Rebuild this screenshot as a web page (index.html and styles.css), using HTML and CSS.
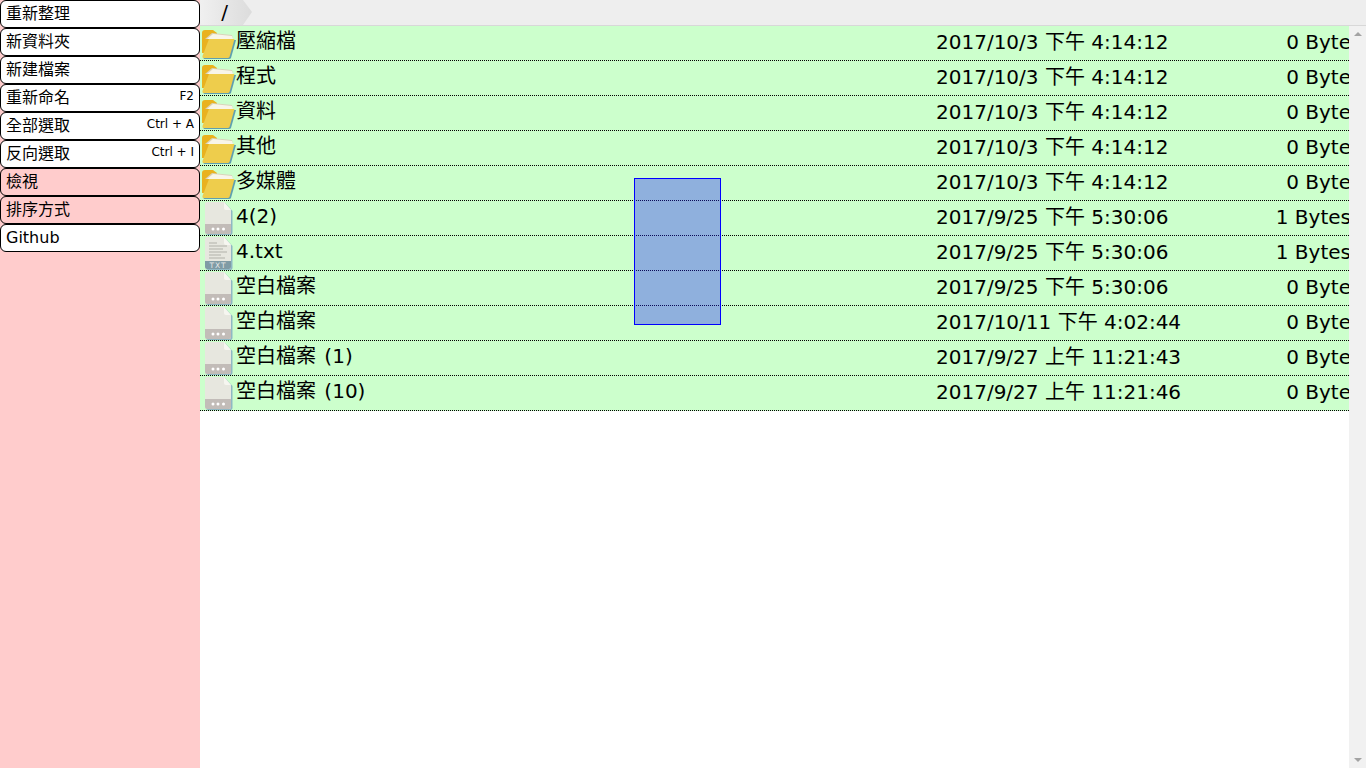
FILE: index.html
```html
<!DOCTYPE html>
<html lang="zh-Hant">
<head>
<meta charset="utf-8">
<title>檔案總管</title>
<link rel="stylesheet" href="styles.css">
</head>
<body>
<svg class="defs" width="0" height="0" aria-hidden="true">
  <defs>
    <symbol id="folder" viewBox="0 0 36 34">
      <path d="M2 7q0-3 3-3h8l4 3v20H2z" fill="#e9b21f"/>
      <path d="M5 13l7-6 20 2 1 4z" fill="#d9d3ba"/>
      <path d="M7 13l6-5 19 2 1 3z" fill="#f8f5e8"/>
      <path d="M10 14h26l-5 18q-.5 1-2 1H4.500q-1.500 0-1-2z" fill="#5f9fb0"/>
      <path d="M9 13h25.500l-5 18q-.5 1-2 1H3.500q-1.500 0-1-2z" fill="#eecd4c"/>
    </symbol>
    <symbol id="file" viewBox="0 0 36 34">
      <path d="M8 2h17l7.500 8v22q0 2-2 2H8q-2 0-2-2V4q0-2 2-2z" fill="#8fb8c4"/>
      <path d="M7 1h17l7 8v22q0 2-2 2H7q-2 0-2-2V3q0-2 2-2z" fill="#e7e7df"/>
      <path d="M24 1l7 8h-5q-2 0-2-2z" fill="#f6f6f0"/>
      <path d="M5 23h26v8q0 2-2 2H7q-2 0-2-2z" fill="#c2bcb8"/>
      <circle cx="13" cy="28" r="1.500" fill="#fff"/>
      <circle cx="18" cy="28" r="1.500" fill="#fff"/>
      <circle cx="23.500" cy="28" r="1.500" fill="#fff"/>
    </symbol>
    <symbol id="txt" viewBox="0 0 36 34">
      <path d="M8 2h17l7.500 8v22q0 2-2 2H8q-2 0-2-2V4q0-2 2-2z" fill="#8fb8c4"/>
      <path d="M7 1h17l7 8v22q0 2-2 2H7q-2 0-2-2V3q0-2 2-2z" fill="#e7e7df"/>
      <path d="M24 1l7 8h-5q-2 0-2-2z" fill="#f6f6f0"/>
      <path d="M9 7h8M9 10h18M9 13h14M9 16h18M9 19h12M9 22h16" stroke="#c4c4bc" stroke-width="1.500" fill="none"/>
      <path d="M5 25h26v6q0 2-2 2H7q-2 0-2-2z" fill="#7f9ba5"/>
      <text class="txt-label" x="18" y="32">TXT</text>
    </symbol>
  </defs>
</svg>

<div class="app">
  <aside class="menu">
    <button class="menu-item"><span>重新整理</span></button>
    <button class="menu-item"><span>新資料夾</span></button>
    <button class="menu-item"><span>新建檔案</span></button>
    <button class="menu-item"><span>重新命名</span><kbd>F2</kbd></button>
    <button class="menu-item"><span>全部選取</span><kbd>Ctrl + A</kbd></button>
    <button class="menu-item"><span>反向選取</span><kbd>Ctrl + I</kbd></button>
    <button class="menu-item sub"><span>檢視</span></button>
    <button class="menu-item sub"><span>排序方式</span></button>
    <button class="menu-item"><span>Github</span></button>
  </aside>

  <main class="content">
    <nav class="crumbs">
      <div class="crumb">/</div>
    </nav>
    <div class="pane">
      <ul class="files">
        <li class="row"><svg class="icon"><use href="#folder"/></svg><span class="name">壓縮檔</span><span class="date">2017/10/3 下午 4:14:12</span><span class="size">0 Byte</span></li>
        <li class="row"><svg class="icon"><use href="#folder"/></svg><span class="name">程式</span><span class="date">2017/10/3 下午 4:14:12</span><span class="size">0 Byte</span></li>
        <li class="row"><svg class="icon"><use href="#folder"/></svg><span class="name">資料</span><span class="date">2017/10/3 下午 4:14:12</span><span class="size">0 Byte</span></li>
        <li class="row"><svg class="icon"><use href="#folder"/></svg><span class="name">其他</span><span class="date">2017/10/3 下午 4:14:12</span><span class="size">0 Byte</span></li>
        <li class="row"><svg class="icon"><use href="#folder"/></svg><span class="name">多媒體</span><span class="date">2017/10/3 下午 4:14:12</span><span class="size">0 Byte</span></li>
        <li class="row"><svg class="icon"><use href="#file"/></svg><span class="name">4(2)</span><span class="date">2017/9/25 下午 5:30:06</span><span class="size">1 Bytes</span></li>
        <li class="row"><svg class="icon"><use href="#txt"/></svg><span class="name">4.txt</span><span class="date">2017/9/25 下午 5:30:06</span><span class="size">1 Bytes</span></li>
        <li class="row"><svg class="icon"><use href="#file"/></svg><span class="name">空白檔案</span><span class="date">2017/9/25 下午 5:30:06</span><span class="size">0 Byte</span></li>
        <li class="row"><svg class="icon"><use href="#file"/></svg><span class="name">空白檔案</span><span class="date">2017/10/11 下午 4:02:44</span><span class="size">0 Byte</span></li>
        <li class="row"><svg class="icon"><use href="#file"/></svg><span class="name">空白檔案 (1)</span><span class="date">2017/9/27 上午 11:21:43</span><span class="size">0 Byte</span></li>
        <li class="row"><svg class="icon"><use href="#file"/></svg><span class="name">空白檔案 (10)</span><span class="date">2017/9/27 上午 11:21:46</span><span class="size">0 Byte</span></li>
      </ul>
      <div class="scrollbar">
        <span class="arrow up"></span>
        <span class="arrow down"></span>
      </div>
    </div>
  </main>
</div>
<div class="marquee"></div>
</body>
</html>
```

FILE: styles.css
```css
* { box-sizing: border-box; }
html, body { margin: 0; height: 100%; overflow: hidden; }
body {
  background: #fff;
  color: #000;
  font-family: "DejaVu Sans", "Noto Sans CJK TC", sans-serif;
}
.defs { position: absolute; }
.app { display: flex; height: 768px; }

.menu {
  width: 200px;
  flex: none;
  background: #fcc;
  display: flex;
  flex-direction: column;
}
.menu-item {
  height: 28px;
  display: flex;
  align-items: center;
  justify-content: space-between;
  padding: 0 5px;
  background: #fff;
  border: 1px solid #000;
  border-radius: 6px;
  font: 16px/1 "DejaVu Sans", "Noto Sans CJK TC", sans-serif;
  color: #000;
  text-align: left;
}
.menu-item.sub { background: #fcc; }
.menu-item kbd {
  font: 12px/1 "DejaVu Sans", sans-serif;
  margin-top: -4px;
}

.content { flex: 1; min-width: 0; display: flex; flex-direction: column; }
.crumbs {
  height: 26px;
  flex: none;
  background: #eee;
  border-bottom: 1px solid #d8d8d8;
  display: flex;
}
.crumb {
  width: 52px;
  height: 25px;
  background: linear-gradient(to right, #f0f0f0, #dcdcdc);
  clip-path: polygon(0 0, 43px 0, 52px 12px, 43px 25px, 4px 25px, 1px 23px, 0 20px);
  font: 20px/24px "DejaVu Sans", sans-serif;
  text-align: center;
  padding-right: 3px;
}

.pane { flex: 1; min-height: 0; display: flex; }
.files { flex: 1; min-width: 0; margin: 0; padding: 0; list-style: none; }
.row {
  height: 35px;
  display: flex;
  align-items: flex-start;
  background: #cfc;
  border-bottom: 1px dotted #000;
  font-size: 20px;
  line-height: 30px;
  white-space: nowrap;
  overflow: hidden;
}
.icon { width: 36px; height: 34px; flex: none; }
.name { width: 700px; flex: none; word-spacing: 2px; }
.date { flex: 1; line-height: 32px; }
.size { line-height: 32px; text-align: right; margin-right: -2px; }
.txt-label {
  font: 7.500px "DejaVu Sans", sans-serif;
  fill: #e3e7e7;
  text-anchor: middle;
  letter-spacing: 1px;
}

.scrollbar {
  width: 17px;
  flex: none;
  background: #f1f1f1;
  display: flex;
  flex-direction: column;
  justify-content: space-between;
  align-items: center;
  padding: 6px 0;
}
.arrow { width: 0; height: 0; border-left: 4px solid transparent; border-right: 4px solid transparent; }
.arrow.up { border-bottom: 4px solid #a3a3a3; }
.arrow.down { border-top: 4px solid #a3a3a3; }

.marquee {
  position: absolute;
  left: 634px;
  top: 178px;
  width: 87px;
  height: 147px;
  background: rgba(29, 29, 252, 0.35);
  border: 1px solid #00f;
}
```
